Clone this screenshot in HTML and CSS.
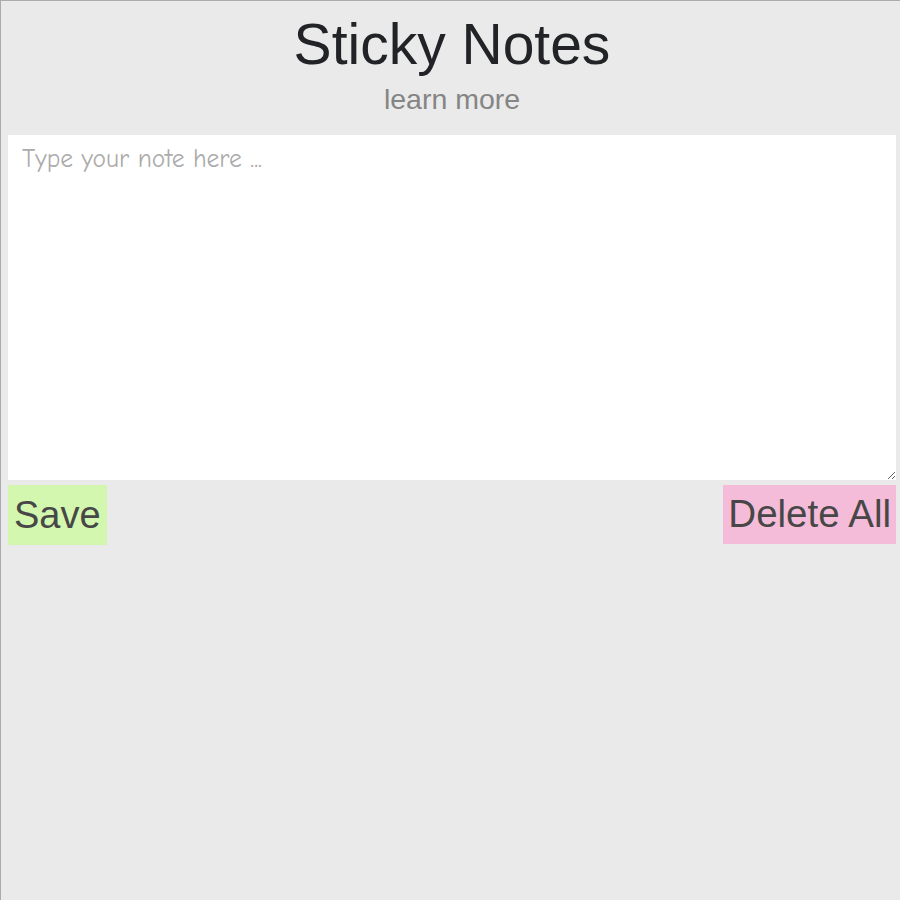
FILE: index.html
```html
<!DOCTYPE html>
<html>
<head>
<meta charset="utf-8">
<title>Sticky Notes</title>
<link rel="stylesheet" href="styles.css">
</head>
<body>
<header class="header">
  <h1 class="title">Sticky Notes</h1>
  <a class="learn" href="#">learn more</a>
</header>
<textarea class="note-input" placeholder="Type your note here ..."></textarea>
<div class="actions">
  <button class="btn btn-save">Save</button>
  <button class="btn btn-delete">Delete All</button>
</div>
</body>
</html>
```
FILE: styles.css
```css
html {
  background: #eaeaea;
  border-top: 1px solid #ababab;
  border-left: 1px solid #ababab;
  min-height: 900px;
  box-sizing: border-box;
}
body {
  margin: 0 4px 8px 7px;
  padding-top: 7px;
  font-family: "Liberation Sans", Arial, sans-serif;
}
.header {
  display: flex;
  flex-direction: column;
  align-items: center;
}
.title {
  margin: 0;
  font-size: 57px;
  font-weight: normal;
  line-height: 73px;
  color: #212326;
}
.learn {
  font-size: 28.5px;
  line-height: 36px;
  color: #858585;
  text-decoration: none;
  margin-bottom: 18px;
}
.note-input {
  display: block;
  box-sizing: border-box;
  width: 888px;
  height: 345px;
  border: none;
  outline: none;
  margin: 0;
  padding: 9px 14px;
  background: #fff;
  font-family: "Comic Sans MS", "Comic Neue", cursive;
  font-size: 25.5px;
  color: #333;
}
.note-input::placeholder {
  color: #ababab;
}
.actions {
  display: flex;
  justify-content: space-between;
  align-items: flex-start;
  width: 888px;
  margin-top: 5px;
}
.btn {
  border: none;
  margin: 0;
  font-family: "Liberation Sans", Arial, sans-serif;
  font-size: 38px;
  line-height: 44px;
  color: #474747;
  padding: 8px 6px;
}
.btn-save {
  background: #d3f7ae;
}
.btn-delete {
  background: #f5bcd9;
  padding: 7px 5px 8px;
  font-size: 38.5px;
}
```
